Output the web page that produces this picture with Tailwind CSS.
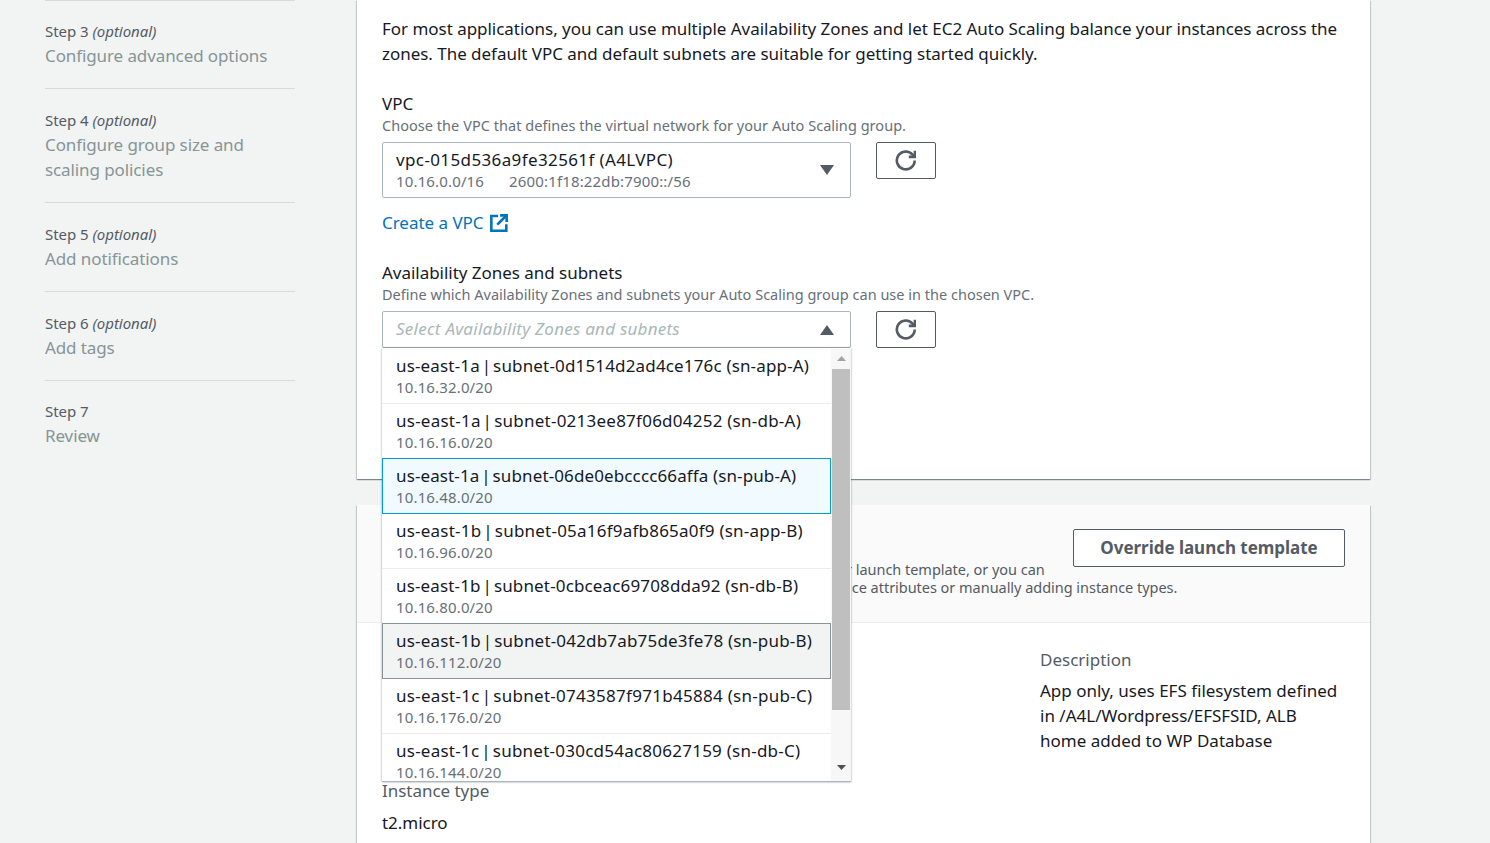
<!doctype html>
<html lang="en">
<head>
<meta charset="utf-8">
<title>Create Auto Scaling group</title>
<script src="https://cdn.jsdelivr.net/npm/@tailwindcss/browser@4"></script>
</head>
<body>
<div class="relative flex h-[843px] w-[1490px] overflow-hidden bg-[#f2f3f3] font-['Noto_Sans',sans-serif] text-[17px] leading-[25px] tracking-[-0.03px] text-[#16191f]">
  <aside class="w-[357px] shrink-0 pl-[45px] pr-[62px]">
    <div class="border-t border-[#d5dbdb] pt-[18px] pb-[19px]">
      <div class="mb-[1px] text-[15px] leading-[24px] text-[#545b64]">Step 3 <i>(optional)</i></div>
      <div class="mt-[-1px] pb-[1px] tracking-[-0.1px] text-[#879596]">Configure advanced options</div>
    </div>
    <div class="border-t border-[#d5dbdb] pt-[19px] pb-[20px]">
      <div class="text-[15px] leading-[24px] text-[#545b64]">Step 4 <i>(optional)</i></div>
      <div class="tracking-[-0.1px] text-[#879596]">Configure group size and<br>scaling policies</div>
    </div>
    <div class="border-t border-[#d5dbdb] pt-[19px] pb-[20px]">
      <div class="text-[15px] leading-[24px] text-[#545b64]">Step 5 <i>(optional)</i></div>
      <div class="tracking-[-0.1px] text-[#879596]">Add notifications</div>
    </div>
    <div class="border-t border-[#d5dbdb] pt-[19px] pb-[20px]">
      <div class="text-[15px] leading-[24px] text-[#545b64]">Step 6 <i>(optional)</i></div>
      <div class="tracking-[-0.1px] text-[#879596]">Add tags</div>
    </div>
    <div class="border-t border-[#d5dbdb] pt-[18px] pb-[20px]">
      <div class="mb-[1px] text-[15px] leading-[24px] text-[#545b64]">Step 7</div>
      <div class="mt-[-1px] tracking-[-0.1px] text-[#879596]">Review</div>
    </div>
  </aside>

  <main class="flex w-[1013px] shrink-0 flex-col gap-[26px]">
    <section class="h-[479px] bg-white px-[25px] pt-[16px] shadow-[0_1px_1px_0_rgba(0,28,36,0.3),1px_1px_1px_0_rgba(0,28,36,0.15),-1px_1px_1px_0_rgba(0,28,36,0.15)]">
      <p>For most applications, you can use multiple Availability Zones and let EC2 Auto Scaling balance your instances across the<br>zones. The default VPC and default subnets are suitable for getting started quickly.</p>
      <div class="mt-[25px]">VPC</div>
      <div class="text-[14.5px] leading-[19px] tracking-[0.04px] text-[#687078]">Choose the VPC that defines the virtual network for your Auto Scaling group.</div>
      <div class="mt-[7px] flex items-start gap-[25px]">
        <div class="flex h-[56px] w-[469px] items-center justify-between rounded-[2px] border border-[#aab7b8] bg-white pl-[13px] pr-[16px]">
          <div>
            <div class="leading-[24px] tracking-[0.38px]">vpc-015d536a9fe32561f (A4LVPC)</div>
            <div class="flex gap-[25px] pb-[2px] text-[15px] leading-[18px] tracking-[0.15px] text-[#687078]"><span>10.16.0.0/16</span><span>2600:1f18:22db:7900::/56</span></div>
          </div>
          <svg class="h-[10px] w-[14px]" viewBox="0 0 14 10"><path d="M0 0h14L7 10z" fill="#545b64"/></svg>
        </div>
        <button class="flex h-[37px] w-[60px] items-center justify-center rounded-[2px] border border-[#545b64] bg-white">
          <svg class="mr-[2px] h-[21px] w-[21px]" viewBox="0 0 16 16" fill="none" stroke="#545b64" stroke-width="2"><path d="M10.5 5.2h4.7V.5"/><path d="M15 8a6.8 6.8 0 1 1-1.6-4.4l1.5 1.5"/></svg>
        </button>
      </div>
      <a class="mt-[12px] flex items-center gap-[6px] text-[#0073bb]" href="#">Create a VPC
        <svg class="h-[18px] w-[18px]" viewBox="0 0 16 16" fill="none" stroke="#0073bb" stroke-width="2.3"><path d="M14.5 9v6H1.2V1.8h6"/><path d="M9 1.2h5.8V7"/><path d="M6.5 9.5 14.5 1.5"/></svg>
      </a>
      <div class="mt-[25px]">Availability Zones and subnets</div>
      <div class="text-[14.5px] leading-[19px] tracking-[0.01px] text-[#687078]">Define which Availability Zones and subnets your Auto Scaling group can use in the chosen VPC.</div>
      <div class="mt-[7px] flex items-start gap-[25px]">
        <div class="flex h-[37px] w-[469px] items-center justify-between rounded-[2px] border border-[#aab7b8] bg-white pb-[2px] pl-[13px] pr-[16px]">
          <span class="italic tracking-[0.24px] text-[#aab7b8]">Select Availability Zones and subnets</span>
          <svg class="mt-[2px] h-[10px] w-[14px]" viewBox="0 0 14 10"><path d="M0 10h14L7 0z" fill="#545b64"/></svg>
        </div>
        <button class="flex h-[37px] w-[60px] items-center justify-center rounded-[2px] border border-[#545b64] bg-white">
          <svg class="mr-[2px] h-[21px] w-[21px]" viewBox="0 0 16 16" fill="none" stroke="#545b64" stroke-width="2"><path d="M10.5 5.2h4.7V.5"/><path d="M15 8a6.8 6.8 0 1 1-1.6-4.4l1.5 1.5"/></svg>
        </button>
      </div>
    </section>

    <section class="flex-1 bg-white shadow-[0_1px_1px_0_rgba(0,28,36,0.3),1px_1px_1px_0_rgba(0,28,36,0.15),-1px_1px_1px_0_rgba(0,28,36,0.15)]">
      <header class="flex h-[118px] items-start justify-between border-b border-[#eaeded] bg-[#fafafa] pr-[25px] pt-[24px]">
        <div class="w-[716px] whitespace-nowrap pt-[31px] text-[14.5px] leading-[18px] text-[#545b64]">
          <div class="pl-[464px]">your launch template, or you can</div>
          <div class="pl-[453px]">instance attributes or manually adding instance types.</div>
        </div>
        <button class="flex h-[38px] w-[272px] items-center justify-center rounded-[2px] border border-[#545b64] bg-white pb-[2px] font-bold text-[#545b64]">Override launch template</button>
      </header>
      <div class="flex pl-[25px] pr-[25px] pt-[24px]">
        <div class="w-[658px] pt-[133px]">
          <div class="leading-[21px] text-[#545b64]">Instance type</div>
          <div class="mt-[9px]">t2.micro</div>
        </div>
        <div class="w-[305px] tracking-[0px]">
          <div class="text-[#545b64]">Description</div>
          <div class="mt-[6px]">App only, uses EFS filesystem defined in /A4L/Wordpress/EFSFSID, ALB home added to WP Database</div>
        </div>
      </div>
    </section>
  </main>

  <div class="absolute left-[382px] top-[348px] flex h-[434px] w-[469px] overflow-hidden border-b border-[#aab7b8] bg-white pt-[1px] shadow-[0_0_2px_rgba(0,28,36,0.45)]">
    <ul class="w-[449px] shrink-0">
      <li class="h-[55px] border-b border-[#eaeded] pl-[14px] pt-[4px]"><div class="tracking-[0.16px]">us-east-1a&#8202;|&#8202;subnet-0d1514d2ad4ce176c (sn-app-A)</div><div class="text-[15px] leading-[18px] tracking-[0.15px] text-[#687078]">10.16.32.0/20</div></li>
      <li class="h-[54px] pl-[14px] pt-[4px]"><div class="tracking-[0.24px]">us-east-1a&#8202;|&#8202;subnet-0213ee87f06d04252 (sn-db-A)</div><div class="text-[15px] leading-[18px] tracking-[0.15px] text-[#687078]">10.16.16.0/20</div></li>
      <li class="h-[56px] border border-[#00a1c9] bg-[#f1faff] pl-[13px] pt-[4px]"><div class="tracking-[0.12px]">us-east-1a&#8202;|&#8202;subnet-06de0ebcccc66affa (sn-pub-A)</div><div class="text-[15px] leading-[18px] tracking-[0.15px] text-[#687078]">10.16.48.0/20</div></li>
      <li class="h-[55px] border-b border-[#eaeded] pl-[14px] pt-[4px]"><div class="tracking-[0.22px]">us-east-1b&#8202;|&#8202;subnet-05a16f9afb865a0f9 (sn-app-B)</div><div class="text-[15px] leading-[18px] tracking-[0.15px] text-[#687078]">10.16.96.0/20</div></li>
      <li class="h-[54px] pl-[14px] pt-[4px]"><div class="tracking-[0.15px]">us-east-1b&#8202;|&#8202;subnet-0cbceac69708dda92 (sn-db-B)</div><div class="text-[15px] leading-[18px] tracking-[0.15px] text-[#687078]">10.16.80.0/20</div></li>
      <li class="h-[56px] border border-[#879596] bg-[#f2f3f3] pl-[13px] pt-[4px]"><div class="tracking-[0.18px]">us-east-1b&#8202;|&#8202;subnet-042db7ab75de3fe78 (sn-pub-B)</div><div class="text-[15px] leading-[18px] tracking-[0.15px] text-[#687078]">10.16.112.0/20</div></li>
      <li class="h-[55px] border-b border-[#eaeded] pl-[14px] pt-[4px]"><div class="tracking-[0.28px]">us-east-1c&#8202;|&#8202;subnet-0743587f971b45884 (sn-pub-C)</div><div class="text-[15px] leading-[18px] tracking-[0.15px] text-[#687078]">10.16.176.0/20</div></li>
      <li class="h-[47px] pl-[14px] pt-[4px]"><div class="tracking-[0.24px]">us-east-1c&#8202;|&#8202;subnet-030cd54ac80627159 (sn-db-C)</div><div class="text-[15px] leading-[18px] tracking-[0.15px] text-[#687078]">10.16.144.0/20</div></li>
    </ul>
    <div class="flex w-[20px] shrink-0 flex-col items-center bg-[#f7f7f7]">
      <svg class="mt-[7px] h-[5px] w-[9px]" viewBox="0 0 9 5"><path d="M0 5h9L4.5 0z" fill="#a3a3a3"/></svg>
      <div class="mt-[8px] h-[341px] w-[18px] bg-[#bfbfbf]"></div>
      <svg class="mt-[55px] h-[5px] w-[9px]" viewBox="0 0 9 5"><path d="M0 0h9L4.5 5z" fill="#505050"/></svg>
    </div>
  </div>
</div>
</body>
</html>
